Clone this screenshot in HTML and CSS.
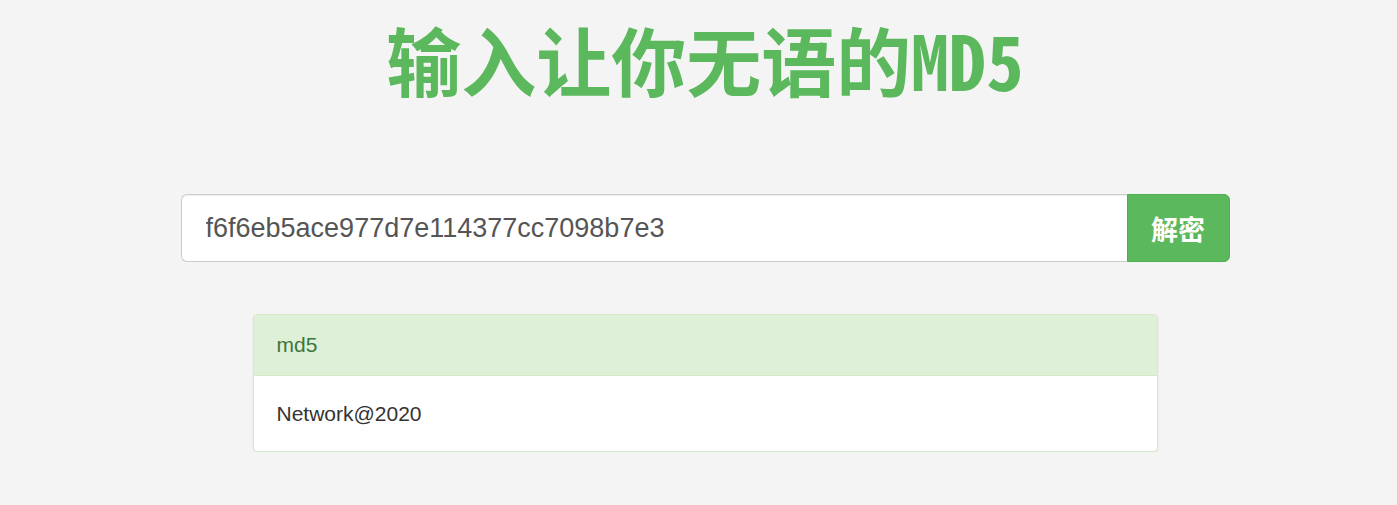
FILE: index.html
```html
<!DOCTYPE html>
<html lang="zh">
<head>
<meta charset="utf-8">
<title>MD5</title>
<link rel="stylesheet" href="styles.css">
</head>
<body>
<main class="page">
  <h1 class="title">输入让你无语的MD5</h1>
  <form class="search">
    <input class="search-input" type="text" value="f6f6eb5ace977d7e114377cc7098b7e3">
    <button class="search-btn" type="button">解密</button>
  </form>
  <section class="panel">
    <div class="panel-heading">md5</div>
    <div class="panel-body">Network@2020</div>
  </section>
</main>
</body>
</html>
```
FILE: styles.css
```css
* { box-sizing: border-box; }
html, body { margin: 0; padding: 0; }
body {
  background: #f4f4f4;
  font-family: "Liberation Sans", Arial, "Noto Sans CJK SC", sans-serif;
  color: #333;
}
.page {
  display: flex;
  flex-direction: column;
  align-items: center;
  padding-left: 13px;
}
.title {
  margin: 11px 0 0;
  font-family: "Noto Sans Mono CJK SC", "Noto Sans CJK SC", sans-serif;
  font-feature-settings: "hwid" 1;
  font-weight: 700;
  font-size: 75px;
  line-height: 96px;
  color: #5cb85c;
}
.search {
  display: flex;
  width: 1049px;
  margin-top: 87px;
}
.search-input {
  flex: 1;
  height: 68px;
  padding: 0 24px;
  border: 1px solid #ccc;
  border-right: 0;
  border-radius: 6px 0 0 6px;
  background: #fff;
  font-family: "Liberation Sans", Arial, sans-serif;
  font-size: 27px;
  color: #555;
  box-shadow: inset 0 1px 1px rgba(0,0,0,.075);
  outline: none;
}
.search-btn {
  width: 103px;
  height: 68px;
  border: 1px solid #4cae4c;
  border-radius: 0 6px 6px 0;
  background: #5cb85c;
  color: #fff;
  font-family: "Noto Sans CJK SC", sans-serif;
  font-weight: 700;
  font-size: 27px;
  padding: 0;
}
.panel {
  width: 905px;
  margin-top: 52px;
  background: #fff;
  border: 1px solid #d6e9c6;
  border-radius: 4px;
  box-shadow: 0 1px 2px rgba(0,0,0,.08);
  overflow: hidden;
}
.panel-heading {
  height: 61px;
  display: flex;
  align-items: center;
  padding: 0 23px;
  background: #dff0d8;
  border-bottom: 1px solid #d6e9c6;
  color: #3c763d;
  font-size: 21px;
}
.panel-body {
  height: 75px;
  display: flex;
  align-items: center;
  padding: 0 23px;
  font-size: 21px;
  color: #333;
}
```
